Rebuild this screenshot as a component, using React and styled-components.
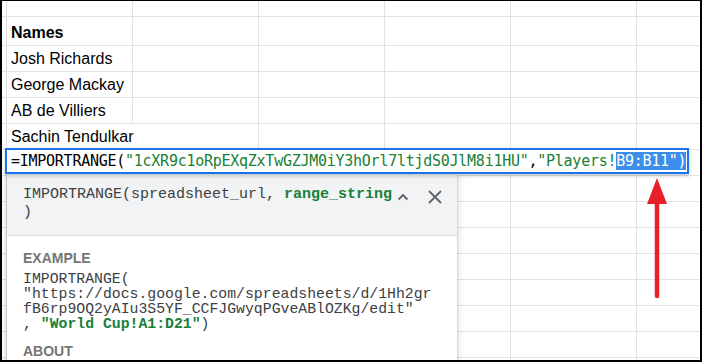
import React from "react";
import styled, { createGlobalStyle } from "styled-components";

const Global = createGlobalStyle`
  html, body { margin: 0; padding: 0; background: #fff; }
  * { box-sizing: border-box; }
`;

const Frame = styled.div`
  position: relative;
  width: 702px;
  height: 362px;
  border: 2px solid #000;
  border-top-width: 1px;
  overflow: hidden;
  background: #fff;
  font-family: "Liberation Sans", Arial, sans-serif;
`;

const Grid = styled.div`
  display: grid;
  grid-template-columns: 5px repeat(5, 126px) 1fr;
  grid-template-rows: 16px 29px repeat(14, 26px);
`;

const Cell = styled.div`
  border-right: ${(p) => (p.$spill || p.$last ? "none" : "1px solid #e2e2e2")};
  border-bottom: 1px solid #e2e2e2;
  display: flex;
  align-items: flex-end;
  padding: 0 0 3px 4px;
  font-size: 16px;
  line-height: 18px;
  font-weight: ${(p) => (p.$bold ? 700 : 400)};
  color: #000;
  white-space: nowrap;
  overflow: visible;
  min-width: 0;
`;

const Editor = styled.div`
  position: absolute;
  left: 3px;
  top: 147px;
  width: 684px;
  height: 26px;
  border: 2px solid #1a73e8;
  background: #fff;
  box-shadow: 0 2px 4px rgba(0, 0, 0, 0.2);
  padding-left: 4px;
  font-family: "DejaVu Sans Mono", "Liberation Mono", monospace;
  font-size: 15px;
  letter-spacing: -0.26px;
  line-height: 22px;
  color: #000;
  white-space: nowrap;
  z-index: 2;
`;

const Str = styled.span`
  color: #188038;
  font-weight: ${(p) => (p.$bold ? 700 : 400)};
`;

const Sel = styled.span`
  background: #3b8eea;
  color: #fff;
`;

const Popup = styled.div`
  position: absolute;
  left: 5px;
  top: 173px;
  width: 450px;
  height: 260px;
  background: #fff;
  box-shadow: 0 1px 2px rgba(60, 64, 67, 0.3), 0 2px 6px 2px rgba(60, 64, 67, 0.15);
  z-index: 1;
  font-family: "Liberation Mono", monospace;
  color: #3c4043;
`;

const Header = styled.div`
  display: flex;
  align-items: flex-start;
  background: #f1f3f4;
  border-bottom: 1px solid #dadce0;
  padding: 12px 14px 13px 16px;
  height: 62px;
`;

const Signature = styled.div`
  flex: 1;
  font-size: 15px;
  line-height: 18px;
  white-space: nowrap;
`;

const Line = styled.div``;

const Icons = styled.div`
  display: flex;
  align-items: center;
  gap: 18px;
  margin-top: 3px;
`;

const Body = styled.div`
  padding: 14px 16px 0 16px;
`;

const Label = styled.div`
  font-family: "Liberation Sans", Arial, sans-serif;
  font-weight: 700;
  font-size: 14px;
  line-height: 16px;
  color: #757575;
  margin-bottom: ${(p) => p.$mb || 0}px;
`;

const Code = styled.div`
  font-size: 14.8px;
  line-height: 15px;
  white-space: pre;
  margin-bottom: 11px;
`;

const Arrow = styled.svg`
  position: absolute;
  left: 641px;
  top: 176px;
  z-index: 3;
`;

const names = ["Names", "Josh Richards", "George Mackay", "AB de Villiers", "Sachin Tendulkar"];

export default function App() {
  const rows = 16;
  const cells = [];
  for (let r = 0; r < rows; r++) {
    for (let c = 0; c < 7; c++) {
      let text = null;
      let bold = false;
      let spill = false;
      if (c === 1 && r >= 1 && r <= 5) {
        text = names[r - 1];
        bold = r === 1;
        spill = r === 5;
      }
      cells.push(
        <Cell key={r + "-" + c} $bold={bold} $spill={spill} $last={c === 6}>
          {text}
        </Cell>
      );
    }
  }
  return (
    <>
      <Global />
      <Frame>
        <Grid>{cells}</Grid>
        <Editor>
          =IMPORTRANGE(<Str>"1cXR9c1oRpEXqZxTwGZJM0iY3hOrl7ltjdS0JlM8i1HU"</Str>,
          <Str>"Players!</Str>
          <Sel>B9:B11")</Sel>
        </Editor>
        <Popup>
          <Header>
            <Signature>
              <Line>
                IMPORTRANGE(spreadsheet_url, <Str $bold>range_string</Str>
              </Line>
              <Line>)</Line>
            </Signature>
            <Icons>
              <svg width="12" height="8" viewBox="0 0 12 8">
                <polyline points="1.5,6.5 6,2 10.5,6.5" fill="none" stroke="#5f6368" strokeWidth="1.8" />
              </svg>
              <svg width="16" height="16" viewBox="0 0 16 16">
                <path d="M2 2 L14 14 M14 2 L2 14" stroke="#5f6368" strokeWidth="1.8" fill="none" />
              </svg>
            </Icons>
          </Header>
          <Body>
            <Label $mb={6}>EXAMPLE</Label>
            <Code>
              {"IMPORTRANGE(\n\"https://docs.google.com/spreadsheets/d/1Hh2gr\nfB6rp9OQ2yAIu3S5YF_CCFJGwyqPGveABlOZKg/edit\"\n, "}
              <Str $bold>"World Cup!A1:D21"</Str>
              {")"}
            </Code>
            <Label>ABOUT</Label>
          </Body>
        </Popup>
        <Arrow width="28" height="124" viewBox="0 0 28 124">
          <polygon points="14,1 4,27 24,27" fill="#e8202a" />
          <line x1="14" y1="24" x2="14" y2="119" stroke="#e8202a" strokeWidth="4.5" strokeLinecap="round" />
        </Arrow>
      </Frame>
    </>
  );
}
